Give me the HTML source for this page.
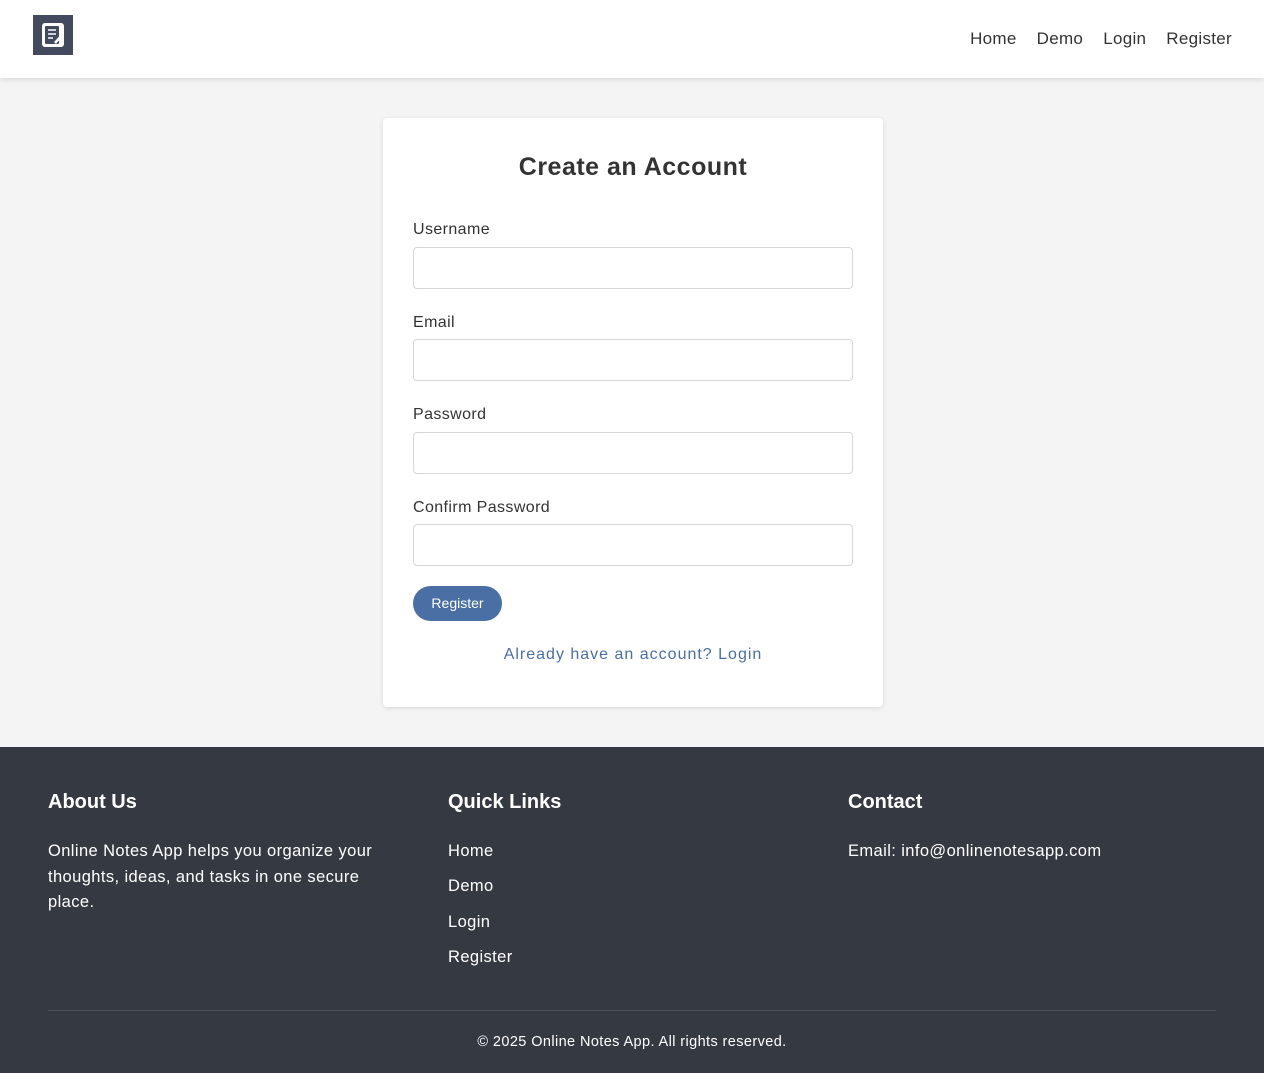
<!DOCTYPE html>
<html><head><style>
*{box-sizing:border-box;margin:0;padding:0}
body{width:1264px;height:1073px;background:#f4f4f4;font-family:"Liberation Sans",sans-serif;color:#333;position:relative;overflow:hidden}
header{position:absolute;top:0;left:0;width:1264px;height:78px;background:#fff;box-shadow:0 2px 5px rgba(0,0,0,.1)}
.logo{position:absolute;left:33px;top:15px;width:40px;height:40px;background:#434a5e}
nav{position:absolute;top:29px;right:32px;font-size:17px;color:#333;letter-spacing:.3px}
nav span{margin-left:20px}
.card{position:absolute;left:383px;top:118px;width:500px;height:589px;background:#fff;border-radius:4px;box-shadow:0 1px 5px rgba(0,0,0,.12)}
h2{position:absolute;top:35px;width:100%;text-align:center;font-size:25px;font-weight:bold;color:#333;letter-spacing:.5px}
label{position:absolute;left:30px;font-size:16px;color:#333;letter-spacing:.4px;margin-top:2px}
.in{position:absolute;left:30px;width:440px;height:42px;border:1px solid #d6d6d6;border-radius:4px}
.btn{position:absolute;left:30px;top:468px;width:89px;height:35px;border-radius:18px;background:#4a6fa5;color:#fff;font-size:14px;text-align:center;line-height:35px}
.lk{position:absolute;top:528px;width:100%;text-align:center;color:#4a6fa5;font-size:16px;letter-spacing:1px}
footer{position:absolute;top:747px;left:0;width:1264px;height:326px;background:#353a42;color:#fff}
footer h3{position:absolute;top:44px;font-size:20px;font-weight:bold}
footer p{position:absolute;font-size:16.5px;line-height:25.5px;letter-spacing:.4px;margin-top:1px}
.hr{position:absolute;left:48px;right:48px;top:263px;border-top:1px solid #4a4f57}
.copy{position:absolute;top:287px;width:100%;text-align:center;font-size:14.5px;letter-spacing:.4px}
</style></head><body>
<header><div class="logo"><svg width="40" height="40" viewBox="0 0 40 40"><rect x="9" y="8" width="22" height="24" rx="3" fill="#fff"/><rect x="12" y="11" width="14" height="18" rx="1" fill="#434a5e"/><path d="M15 15h8M15 19h8M15 23h5" stroke="#fff" stroke-width="1.5"/><path d="M22 28l7-8" stroke="#fff" stroke-width="2.5"/></svg></div>
<nav><span>Home</span><span>Demo</span><span>Login</span><span>Register</span></nav></header>
<div class="card">
<h2>Create an Account</h2>
<label style="top:101px">Username</label><div class="in" style="top:129px"></div>
<label style="top:194px">Email</label><div class="in" style="top:221px"></div>
<label style="top:286px">Password</label><div class="in" style="top:314px"></div>
<label style="top:379px">Confirm Password</label><div class="in" style="top:406px"></div>
<div class="btn">Register</div>
<div class="lk">Already have an account? Login</div>
</div>
<footer>
<h3 style="left:48px">About Us</h3>
<p style="left:48px;top:91px;width:345px">Online Notes App helps you organize your thoughts, ideas, and tasks in one secure place.</p>
<h3 style="left:448px">Quick Links</h3>
<p style="left:448px;top:91px">Home</p><p style="left:448px;top:126px">Demo</p><p style="left:448px;top:162px">Login</p><p style="left:448px;top:197px">Register</p>
<h3 style="left:848px">Contact</h3>
<p style="left:848px;top:91px">Email: info@onlinenotesapp.com</p>
<div class="hr"></div>
<div class="copy">© 2025 Online Notes App. All rights reserved.</div>
</footer>
</body></html>
